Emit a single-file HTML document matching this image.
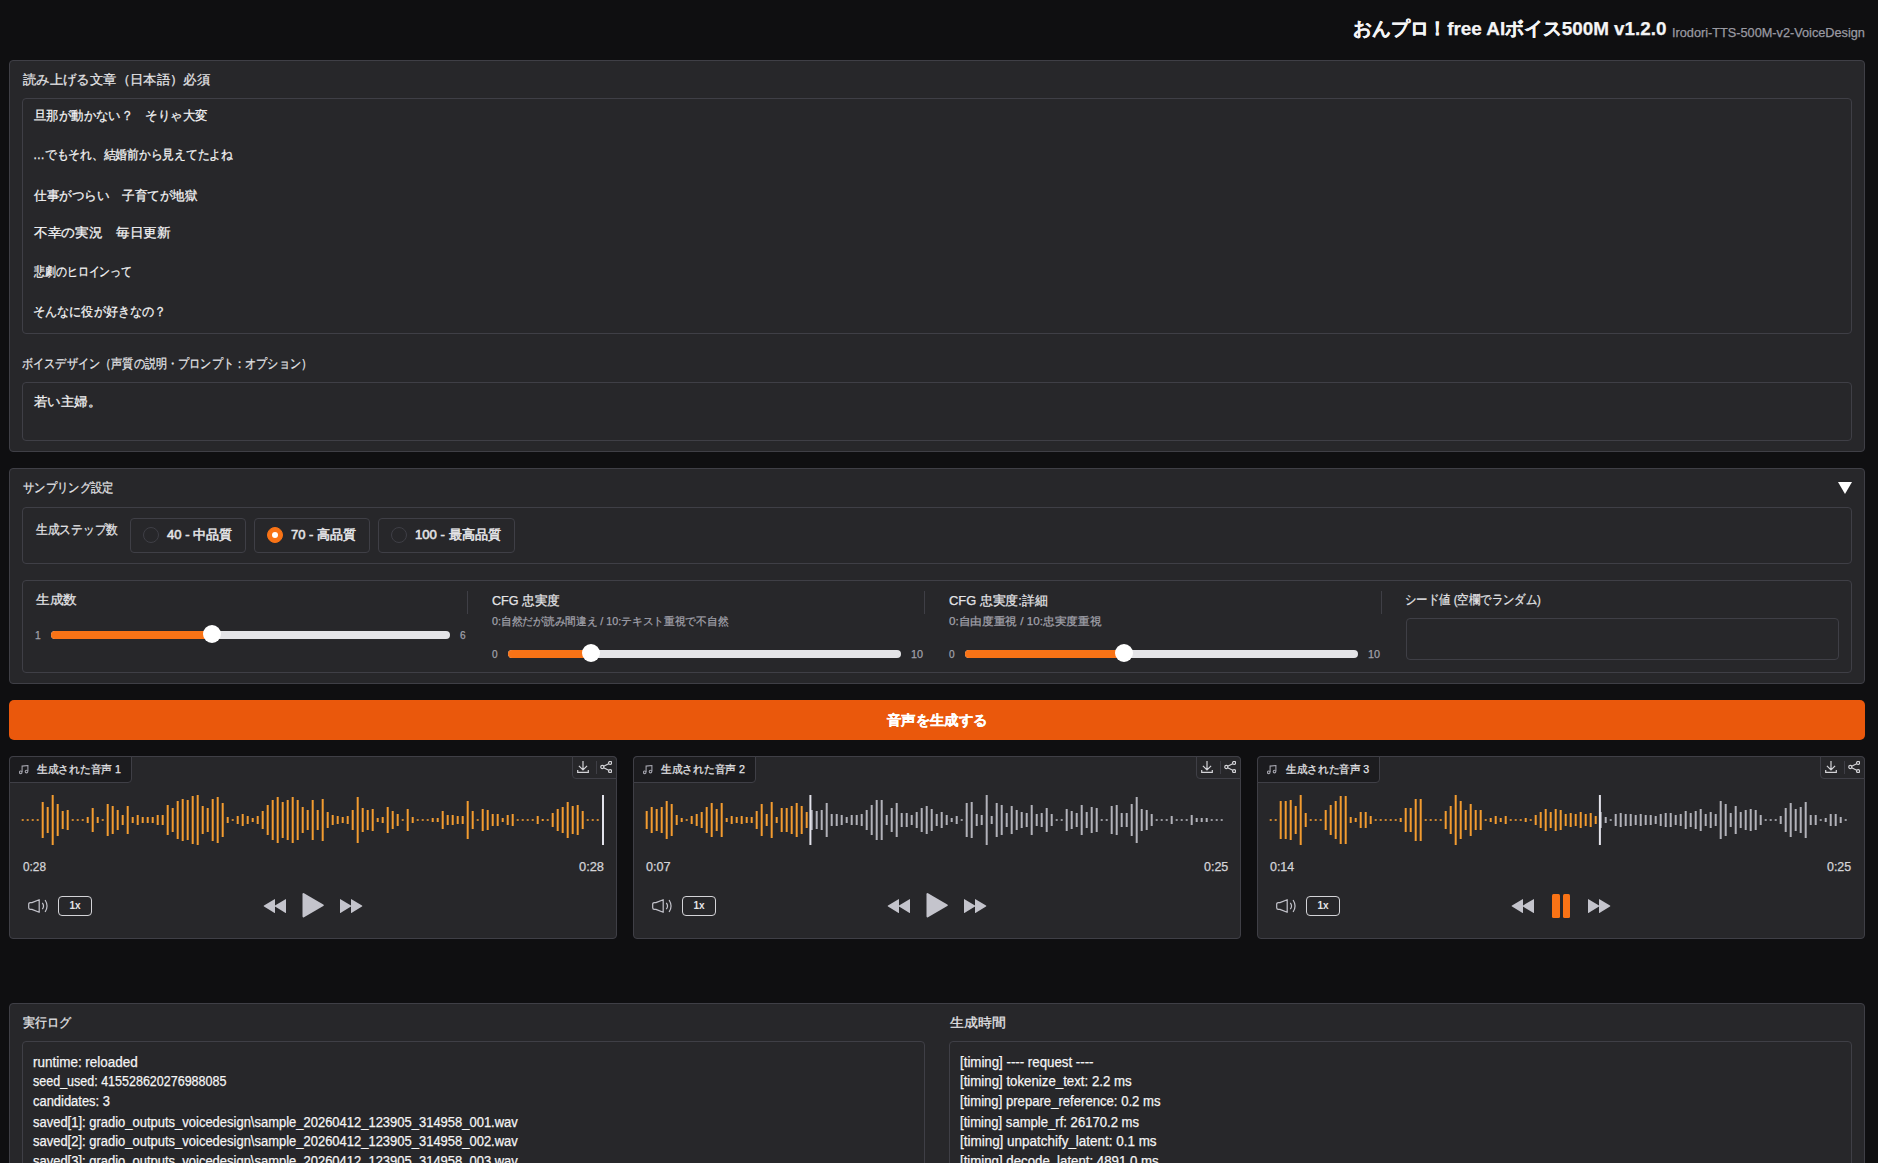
<!DOCTYPE html>
<html lang="ja"><head><meta charset="utf-8">
<style>
*{box-sizing:border-box;margin:0;padding:0}
html,body{width:1878px;height:1163px;overflow:hidden;background:#0f0f11;font-family:"Liberation Sans",sans-serif;color:#e4e4e7}
.a{position:absolute}
.t{position:absolute;white-space:pre;line-height:1.2;transform-origin:0 0;-webkit-text-stroke:0.25px currentColor}
.blk{position:absolute;background:#27272a;border:1px solid #3f3f46;border-radius:4px}
.ta{position:absolute;background:#27272a;border:1px solid #3f3f46;border-radius:4px}
.track{position:absolute;height:8px;border-radius:4px;background:#e4e4e7;overflow:hidden}
.fill{position:absolute;left:0;top:0;height:8px;background:#f97316}
.thumb{position:absolute;width:18px;height:18px;border-radius:50%;background:#fff}
.radio{position:absolute;top:518px;height:35px;border:1px solid #3f3f46;border-radius:4px;background:#27272a}
.rc{position:absolute;left:12px;top:8px;width:16px;height:16px;border-radius:50%;border:1px solid #3f3f46;background:#27272a}
.sep{position:absolute;width:1px;height:23px;top:591px;background:#3f3f46}
.player{position:absolute;top:756px;width:608px;height:183px;background:#27272a;border:1px solid #3f3f46;border-radius:4px}
.tab{position:absolute;left:-1px;top:-1px;width:123px;height:27px;background:#1c1c1f;border:1px solid #3f3f46;border-radius:4px 0 4px 0}
.icons{position:absolute;right:-1px;top:-1px;width:45px;height:23px;border:1px solid #3f3f46;border-radius:0 4px 0 4px;background:#27272a}
.wave{position:absolute;left:0;top:0}
.pause{position:absolute;top:136.8px;width:7.6px;height:24.3px;border-radius:1.5px;background:#f97316}
.rate{position:absolute;left:48px;top:139px;width:34px;height:20px;border:1.5px solid #d4d4d8;border-radius:4px;font-size:10px;font-weight:bold;line-height:17px;text-align:center;color:#e4e4e7}
</style></head><body>
<div class="blk" style="left:9px;top:60px;width:1856px;height:392px"></div>
<div class="ta" style="left:22px;top:98px;width:1830px;height:236px"></div>
<div class="ta" style="left:22px;top:382px;width:1830px;height:59px"></div>

<div class="blk" style="left:9px;top:468px;width:1856px;height:216px"></div>
<svg class="a" style="left:1838px;top:482px" width="14" height="12"><polygon points="0,0 14,0 7,12" fill="#fff"/></svg>
<div class="ta" style="left:22px;top:507px;width:1830px;height:57px"></div>
<div class="radio" style="left:130px;width:116px"><div class="rc"></div></div>
<div class="radio" style="left:254px;width:116px"><div class="rc" style="background:#f97316;border-color:#f97316"><div style="position:absolute;left:4px;top:4px;width:6px;height:6px;border-radius:50%;background:#fff"></div></div></div>
<div class="radio" style="left:378px;width:137px"><div class="rc"></div></div>

<div class="ta" style="left:22px;top:580px;width:1830px;height:93px"></div>
<div class="sep" style="left:467px"></div>
<div class="sep" style="left:924px"></div>
<div class="sep" style="left:1381px"></div>
<div class="track" style="left:51px;top:631px;width:399px"><div class="fill" style="width:161px"></div></div>
<div class="thumb" style="left:202.8px;top:625px"></div>
<div class="track" style="left:508px;top:650px;width:393px"><div class="fill" style="width:83px"></div></div>
<div class="thumb" style="left:581.8px;top:643.8px"></div>
<div class="track" style="left:965px;top:650px;width:393px"><div class="fill" style="width:159px"></div></div>
<div class="thumb" style="left:1114.7px;top:643.8px"></div>
<div class="ta" style="left:1406px;top:618px;width:433px;height:42px"></div>

<div class="a" style="left:9px;top:700px;width:1856px;height:40px;background:#ea580c;border-radius:5px"></div>

<div class="player" style="left:9px">
<div class="tab"><svg class="a" style="left:9px;top:8px" width="11" height="10"><g fill="none" stroke="#a1a1aa" stroke-width="1.1"><path d="M3.1 7V1.1L8.9 0.5V6.3"/><circle cx="1.7" cy="7.3" r="1.3"/><circle cx="7.5" cy="6.6" r="1.3"/></g></svg></div>
<div class="icons"><svg class="a" style="left:4px;top:4px" width="12" height="12"><path d="M6 0V8.6M1.9 4.8 6 8.9 10.1 4.8M0.7 9V11.4H11.3V9" fill="none" stroke="#d4d4d8" stroke-width="1.2"/></svg><div class="a" style="left:23px;top:4px;width:1px;height:13px;background:#3f3f46"></div><svg class="a" style="left:27px;top:4px" width="12" height="12"><g fill="none" stroke="#d4d4d8" stroke-width="1.2"><circle cx="10.1" cy="1.9" r="1.55"/><circle cx="2.3" cy="6" r="1.55"/><circle cx="10.1" cy="10.1" r="1.55"/><path d="M3.7 5.2 8.7 2.7M3.7 6.8 8.7 9.3"/></g></svg></div>
<svg class="wave" width="608" height="120"><rect x="11.7" y="62.2" width="2" height="1.6" fill="#f39c30"/><rect x="16.7" y="62.2" width="2" height="1.6" fill="#f39c30"/><rect x="21.7" y="62.2" width="2" height="1.6" fill="#f39c30"/><rect x="26.7" y="62.2" width="2" height="1.6" fill="#f39c30"/><rect x="31.7" y="45.0" width="2" height="36" fill="#f39c30"/><rect x="36.7" y="50.0" width="2" height="26" fill="#f39c30"/><rect x="41.7" y="38.0" width="2" height="50" fill="#f39c30"/><rect x="46.7" y="47.0" width="2" height="32" fill="#f39c30"/><rect x="51.7" y="54.0" width="2" height="18" fill="#f39c30"/><rect x="56.7" y="53.0" width="2" height="20" fill="#f39c30"/><rect x="61.7" y="62.2" width="2" height="1.6" fill="#f39c30"/><rect x="66.7" y="62.2" width="2" height="1.6" fill="#f39c30"/><rect x="71.7" y="62.2" width="2" height="1.6" fill="#f39c30"/><rect x="76.7" y="60.0" width="2" height="6" fill="#f39c30"/><rect x="81.7" y="51.0" width="2" height="24" fill="#f39c30"/><rect x="86.7" y="60.0" width="2" height="6" fill="#f39c30"/><rect x="91.7" y="62.2" width="2" height="1.6" fill="#f39c30"/><rect x="96.7" y="47.0" width="2" height="32" fill="#f39c30"/><rect x="101.7" y="49.0" width="2" height="28" fill="#f39c30"/><rect x="106.7" y="53.0" width="2" height="20" fill="#f39c30"/><rect x="111.7" y="58.0" width="2" height="10" fill="#f39c30"/><rect x="116.7" y="49.0" width="2" height="28" fill="#f39c30"/><rect x="121.7" y="60.0" width="2" height="6" fill="#f39c30"/><rect x="126.7" y="58.0" width="2" height="10" fill="#f39c30"/><rect x="131.7" y="60.0" width="2" height="6" fill="#f39c30"/><rect x="136.7" y="60.0" width="2" height="6" fill="#f39c30"/><rect x="141.7" y="60.0" width="2" height="6" fill="#f39c30"/><rect x="146.7" y="58.0" width="2" height="10" fill="#f39c30"/><rect x="151.7" y="58.0" width="2" height="10" fill="#f39c30"/><rect x="156.7" y="48.0" width="2" height="30" fill="#f39c30"/><rect x="161.7" y="51.0" width="2" height="24" fill="#f39c30"/><rect x="166.7" y="44.0" width="2" height="38" fill="#f39c30"/><rect x="171.7" y="42.0" width="2" height="42" fill="#f39c30"/><rect x="176.7" y="43.0" width="2" height="40" fill="#f39c30"/><rect x="181.7" y="39.0" width="2" height="48" fill="#f39c30"/><rect x="186.7" y="38.0" width="2" height="50" fill="#f39c30"/><rect x="191.7" y="49.0" width="2" height="28" fill="#f39c30"/><rect x="196.7" y="51.0" width="2" height="24" fill="#f39c30"/><rect x="201.7" y="42.0" width="2" height="42" fill="#f39c30"/><rect x="206.7" y="40.0" width="2" height="46" fill="#f39c30"/><rect x="211.7" y="46.0" width="2" height="34" fill="#f39c30"/><rect x="216.7" y="60.0" width="2" height="6" fill="#f39c30"/><rect x="221.7" y="62.2" width="2" height="1.6" fill="#f39c30"/><rect x="226.7" y="59.0" width="2" height="8" fill="#f39c30"/><rect x="231.7" y="57.0" width="2" height="12" fill="#f39c30"/><rect x="236.7" y="59.0" width="2" height="8" fill="#f39c30"/><rect x="241.7" y="61.0" width="2" height="4" fill="#f39c30"/><rect x="246.7" y="59.0" width="2" height="8" fill="#f39c30"/><rect x="251.7" y="54.0" width="2" height="18" fill="#f39c30"/><rect x="256.7" y="48.0" width="2" height="30" fill="#f39c30"/><rect x="261.7" y="43.0" width="2" height="40" fill="#f39c30"/><rect x="266.7" y="40.0" width="2" height="46" fill="#f39c30"/><rect x="271.7" y="45.0" width="2" height="36" fill="#f39c30"/><rect x="276.7" y="43.0" width="2" height="40" fill="#f39c30"/><rect x="281.7" y="40.0" width="2" height="46" fill="#f39c30"/><rect x="286.7" y="43.0" width="2" height="40" fill="#f39c30"/><rect x="291.7" y="50.0" width="2" height="26" fill="#f39c30"/><rect x="296.7" y="53.0" width="2" height="20" fill="#f39c30"/><rect x="301.7" y="43.0" width="2" height="40" fill="#f39c30"/><rect x="306.7" y="53.0" width="2" height="20" fill="#f39c30"/><rect x="311.7" y="42.0" width="2" height="42" fill="#f39c30"/><rect x="316.7" y="55.0" width="2" height="16" fill="#f39c30"/><rect x="321.7" y="58.0" width="2" height="10" fill="#f39c30"/><rect x="326.7" y="59.0" width="2" height="8" fill="#f39c30"/><rect x="331.7" y="60.0" width="2" height="6" fill="#f39c30"/><rect x="336.7" y="59.0" width="2" height="8" fill="#f39c30"/><rect x="341.7" y="53.0" width="2" height="20" fill="#f39c30"/><rect x="346.7" y="40.0" width="2" height="46" fill="#f39c30"/><rect x="351.7" y="51.0" width="2" height="24" fill="#f39c30"/><rect x="356.7" y="53.0" width="2" height="20" fill="#f39c30"/><rect x="361.7" y="52.0" width="2" height="22" fill="#f39c30"/><rect x="366.7" y="61.0" width="2" height="4" fill="#f39c30"/><rect x="371.7" y="60.0" width="2" height="6" fill="#f39c30"/><rect x="376.7" y="50.0" width="2" height="26" fill="#f39c30"/><rect x="381.7" y="54.0" width="2" height="18" fill="#f39c30"/><rect x="386.7" y="57.0" width="2" height="12" fill="#f39c30"/><rect x="391.7" y="62.2" width="2" height="1.6" fill="#f39c30"/><rect x="396.7" y="52.0" width="2" height="22" fill="#f39c30"/><rect x="401.7" y="60.0" width="2" height="6" fill="#f39c30"/><rect x="406.7" y="62.2" width="2" height="1.6" fill="#f39c30"/><rect x="411.7" y="62.2" width="2" height="1.6" fill="#f39c30"/><rect x="416.7" y="62.2" width="2" height="1.6" fill="#f39c30"/><rect x="421.7" y="61.0" width="2" height="4" fill="#f39c30"/><rect x="426.7" y="61.0" width="2" height="4" fill="#f39c30"/><rect x="431.7" y="54.0" width="2" height="18" fill="#f39c30"/><rect x="436.7" y="58.0" width="2" height="10" fill="#f39c30"/><rect x="441.7" y="58.0" width="2" height="10" fill="#f39c30"/><rect x="446.7" y="59.0" width="2" height="8" fill="#f39c30"/><rect x="451.7" y="59.0" width="2" height="8" fill="#f39c30"/><rect x="456.7" y="44.0" width="2" height="38" fill="#f39c30"/><rect x="461.7" y="54.0" width="2" height="18" fill="#f39c30"/><rect x="466.7" y="62.2" width="2" height="1.6" fill="#f39c30"/><rect x="471.7" y="52.0" width="2" height="22" fill="#f39c30"/><rect x="476.7" y="53.0" width="2" height="20" fill="#f39c30"/><rect x="481.7" y="57.0" width="2" height="12" fill="#f39c30"/><rect x="486.7" y="57.0" width="2" height="12" fill="#f39c30"/><rect x="491.7" y="61.0" width="2" height="4" fill="#f39c30"/><rect x="496.7" y="58.0" width="2" height="10" fill="#f39c30"/><rect x="501.7" y="57.0" width="2" height="12" fill="#f39c30"/><rect x="506.7" y="62.2" width="2" height="1.6" fill="#f39c30"/><rect x="511.7" y="62.2" width="2" height="1.6" fill="#f39c30"/><rect x="516.7" y="62.2" width="2" height="1.6" fill="#f39c30"/><rect x="521.7" y="62.2" width="2" height="1.6" fill="#f39c30"/><rect x="526.7" y="59.0" width="2" height="8" fill="#f39c30"/><rect x="531.7" y="62.0" width="2" height="2" fill="#f39c30"/><rect x="536.7" y="62.2" width="2" height="1.6" fill="#f39c30"/><rect x="541.7" y="56.0" width="2" height="14" fill="#f39c30"/><rect x="546.7" y="52.0" width="2" height="22" fill="#f39c30"/><rect x="551.7" y="50.0" width="2" height="26" fill="#f39c30"/><rect x="556.7" y="45.0" width="2" height="36" fill="#f39c30"/><rect x="561.7" y="49.0" width="2" height="28" fill="#f39c30"/><rect x="566.7" y="48.0" width="2" height="30" fill="#f39c30"/><rect x="571.7" y="54.0" width="2" height="18" fill="#f39c30"/><rect x="576.7" y="62.2" width="2" height="1.6" fill="#f39c30"/><rect x="581.7" y="62.2" width="2" height="1.6" fill="#f39c30"/><rect x="586.7" y="62.2" width="2" height="1.6" fill="#f39c30"/><rect x="592" y="38" width="2" height="50" fill="#e2e2ea"/></svg>
<svg class="a" style="left:18px;top:142px" width="22" height="16"><g fill="none" stroke="#c4c4cc" stroke-width="1.2" stroke-linejoin="round"><path d="M3.9 3.6H2.4Q0.7 3.6 0.7 5.3V8.7Q0.7 10.4 2.4 10.4H3.9L11.2 13.3V0.7Z"/><path d="M14.3 3.8Q16.8 7 14.3 10.2M17.1 1Q21 7 17.1 13"/></g></svg>
<div class="rate">1x</div>
<svg class="a" style="left:253px;top:141px" width="24" height="16"><path d="M11.5 1.2 Q12 0.5 12 1.5 V14.5 Q12 15.5 11.2 14.8 L1 8.6 Q0.2 8 1 7.4Z M22.5 1.2 Q23 0.5 23 1.5 V14.5 Q23 15.5 22.2 14.8 L12 8.6 Q11.2 8 12 7.4Z" fill="#c4c4cc"/></svg><svg class="a" style="left:291px;top:135px" width="24" height="28"><path d="M1.5 2.2 Q1.5 0.5 3 1.3 L22.3 12.4 Q23.6 13.2 22.3 14 L3 25.2 Q1.5 26 1.5 24.3Z" fill="#c4c4cc"/></svg><svg class="a" style="left:329px;top:141px" width="24" height="16"><path d="M1.5 1.2 Q1 0.5 1 1.5 V14.5 Q1 15.5 1.8 14.8 L12 8.6 Q12.8 8 12 7.4Z M12.5 1.2 Q12 0.5 12 1.5 V14.5 Q12 15.5 12.8 14.8 L23 8.6 Q23.8 8 23 7.4Z" fill="#c4c4cc"/></svg>
</div><div class="player" style="left:633px">
<div class="tab"><svg class="a" style="left:9px;top:8px" width="11" height="10"><g fill="none" stroke="#a1a1aa" stroke-width="1.1"><path d="M3.1 7V1.1L8.9 0.5V6.3"/><circle cx="1.7" cy="7.3" r="1.3"/><circle cx="7.5" cy="6.6" r="1.3"/></g></svg></div>
<div class="icons"><svg class="a" style="left:4px;top:4px" width="12" height="12"><path d="M6 0V8.6M1.9 4.8 6 8.9 10.1 4.8M0.7 9V11.4H11.3V9" fill="none" stroke="#d4d4d8" stroke-width="1.2"/></svg><div class="a" style="left:23px;top:4px;width:1px;height:13px;background:#3f3f46"></div><svg class="a" style="left:27px;top:4px" width="12" height="12"><g fill="none" stroke="#d4d4d8" stroke-width="1.2"><circle cx="10.1" cy="1.9" r="1.55"/><circle cx="2.3" cy="6" r="1.55"/><circle cx="10.1" cy="10.1" r="1.55"/><path d="M3.7 5.2 8.7 2.7M3.7 6.8 8.7 9.3"/></g></svg></div>
<svg class="wave" width="608" height="120"><rect x="11.7" y="54.0" width="2" height="18" fill="#f39c30"/><rect x="16.7" y="50.0" width="2" height="26" fill="#f39c30"/><rect x="21.7" y="52.0" width="2" height="22" fill="#f39c30"/><rect x="26.7" y="50.0" width="2" height="26" fill="#f39c30"/><rect x="31.7" y="44.0" width="2" height="38" fill="#f39c30"/><rect x="36.7" y="47.0" width="2" height="32" fill="#f39c30"/><rect x="41.7" y="58.0" width="2" height="10" fill="#f39c30"/><rect x="46.7" y="61.0" width="2" height="4" fill="#f39c30"/><rect x="51.7" y="62.2" width="2" height="1.6" fill="#f39c30"/><rect x="56.7" y="59.0" width="2" height="8" fill="#f39c30"/><rect x="61.7" y="57.0" width="2" height="12" fill="#f39c30"/><rect x="66.7" y="55.0" width="2" height="16" fill="#f39c30"/><rect x="71.7" y="50.0" width="2" height="26" fill="#f39c30"/><rect x="76.7" y="46.0" width="2" height="34" fill="#f39c30"/><rect x="81.7" y="52.0" width="2" height="22" fill="#f39c30"/><rect x="86.7" y="46.0" width="2" height="34" fill="#f39c30"/><rect x="91.7" y="61.0" width="2" height="4" fill="#f39c30"/><rect x="96.7" y="59.0" width="2" height="8" fill="#f39c30"/><rect x="101.7" y="60.0" width="2" height="6" fill="#f39c30"/><rect x="106.7" y="59.0" width="2" height="8" fill="#f39c30"/><rect x="111.7" y="60.0" width="2" height="6" fill="#f39c30"/><rect x="116.7" y="60.0" width="2" height="6" fill="#f39c30"/><rect x="121.7" y="54.0" width="2" height="18" fill="#f39c30"/><rect x="126.7" y="47.0" width="2" height="32" fill="#f39c30"/><rect x="131.7" y="57.0" width="2" height="12" fill="#f39c30"/><rect x="136.7" y="45.0" width="2" height="36" fill="#f39c30"/><rect x="141.7" y="60.0" width="2" height="6" fill="#f39c30"/><rect x="146.7" y="51.0" width="2" height="24" fill="#f39c30"/><rect x="151.7" y="51.0" width="2" height="24" fill="#f39c30"/><rect x="156.7" y="49.0" width="2" height="28" fill="#f39c30"/><rect x="161.7" y="46.0" width="2" height="34" fill="#f39c30"/><rect x="166.7" y="49.0" width="2" height="28" fill="#f39c30"/><rect x="171.7" y="55.0" width="2" height="16" fill="#f39c30"/><rect x="176.7" y="53.0" width="2" height="20" fill="#b2b2ba"/><rect x="181.7" y="54.0" width="2" height="18" fill="#b2b2ba"/><rect x="186.7" y="53.0" width="2" height="20" fill="#b2b2ba"/><rect x="191.7" y="46.0" width="2" height="34" fill="#b2b2ba"/><rect x="196.7" y="57.0" width="2" height="12" fill="#b2b2ba"/><rect x="201.7" y="57.0" width="2" height="12" fill="#b2b2ba"/><rect x="206.7" y="58.0" width="2" height="10" fill="#b2b2ba"/><rect x="211.7" y="60.0" width="2" height="6" fill="#b2b2ba"/><rect x="216.7" y="58.0" width="2" height="10" fill="#b2b2ba"/><rect x="221.7" y="58.0" width="2" height="10" fill="#b2b2ba"/><rect x="226.7" y="57.0" width="2" height="12" fill="#b2b2ba"/><rect x="231.7" y="53.0" width="2" height="20" fill="#b2b2ba"/><rect x="236.7" y="48.0" width="2" height="30" fill="#b2b2ba"/><rect x="241.7" y="43.0" width="2" height="40" fill="#b2b2ba"/><rect x="246.7" y="43.0" width="2" height="40" fill="#b2b2ba"/><rect x="251.7" y="58.0" width="2" height="10" fill="#b2b2ba"/><rect x="256.7" y="51.0" width="2" height="24" fill="#b2b2ba"/><rect x="261.7" y="46.0" width="2" height="34" fill="#b2b2ba"/><rect x="266.7" y="56.0" width="2" height="14" fill="#b2b2ba"/><rect x="271.7" y="56.0" width="2" height="14" fill="#b2b2ba"/><rect x="276.7" y="58.0" width="2" height="10" fill="#b2b2ba"/><rect x="281.7" y="55.0" width="2" height="16" fill="#b2b2ba"/><rect x="286.7" y="51.0" width="2" height="24" fill="#b2b2ba"/><rect x="291.7" y="49.0" width="2" height="28" fill="#b2b2ba"/><rect x="296.7" y="52.0" width="2" height="22" fill="#b2b2ba"/><rect x="301.7" y="57.0" width="2" height="12" fill="#b2b2ba"/><rect x="306.7" y="55.0" width="2" height="16" fill="#b2b2ba"/><rect x="311.7" y="58.0" width="2" height="10" fill="#b2b2ba"/><rect x="316.7" y="61.0" width="2" height="4" fill="#b2b2ba"/><rect x="321.7" y="59.0" width="2" height="8" fill="#b2b2ba"/><rect x="326.7" y="62.2" width="2" height="1.6" fill="#b2b2ba"/><rect x="331.7" y="46.0" width="2" height="34" fill="#b2b2ba"/><rect x="336.7" y="45.0" width="2" height="36" fill="#b2b2ba"/><rect x="341.7" y="57.0" width="2" height="12" fill="#b2b2ba"/><rect x="346.7" y="58.0" width="2" height="10" fill="#b2b2ba"/><rect x="351.7" y="38.0" width="2" height="50" fill="#b2b2ba"/><rect x="356.7" y="59.0" width="2" height="8" fill="#b2b2ba"/><rect x="361.7" y="46.0" width="2" height="34" fill="#b2b2ba"/><rect x="366.7" y="48.0" width="2" height="30" fill="#b2b2ba"/><rect x="371.7" y="56.0" width="2" height="14" fill="#b2b2ba"/><rect x="376.7" y="49.0" width="2" height="28" fill="#b2b2ba"/><rect x="381.7" y="53.0" width="2" height="20" fill="#b2b2ba"/><rect x="386.7" y="55.0" width="2" height="16" fill="#b2b2ba"/><rect x="391.7" y="56.0" width="2" height="14" fill="#b2b2ba"/><rect x="396.7" y="48.0" width="2" height="30" fill="#b2b2ba"/><rect x="401.7" y="57.0" width="2" height="12" fill="#b2b2ba"/><rect x="406.7" y="56.0" width="2" height="14" fill="#b2b2ba"/><rect x="411.7" y="51.0" width="2" height="24" fill="#b2b2ba"/><rect x="416.7" y="57.0" width="2" height="12" fill="#b2b2ba"/><rect x="421.7" y="62.2" width="2" height="1.6" fill="#b2b2ba"/><rect x="426.7" y="62.2" width="2" height="1.6" fill="#b2b2ba"/><rect x="431.7" y="52.0" width="2" height="22" fill="#b2b2ba"/><rect x="436.7" y="54.0" width="2" height="18" fill="#b2b2ba"/><rect x="441.7" y="56.0" width="2" height="14" fill="#b2b2ba"/><rect x="446.7" y="48.0" width="2" height="30" fill="#b2b2ba"/><rect x="451.7" y="55.0" width="2" height="16" fill="#b2b2ba"/><rect x="456.7" y="50.0" width="2" height="26" fill="#b2b2ba"/><rect x="461.7" y="51.0" width="2" height="24" fill="#b2b2ba"/><rect x="466.7" y="62.2" width="2" height="1.6" fill="#b2b2ba"/><rect x="471.7" y="62.2" width="2" height="1.6" fill="#b2b2ba"/><rect x="476.7" y="49.0" width="2" height="28" fill="#b2b2ba"/><rect x="481.7" y="48.0" width="2" height="30" fill="#b2b2ba"/><rect x="486.7" y="56.0" width="2" height="14" fill="#b2b2ba"/><rect x="491.7" y="56.0" width="2" height="14" fill="#b2b2ba"/><rect x="496.7" y="47.0" width="2" height="32" fill="#b2b2ba"/><rect x="501.7" y="40.0" width="2" height="46" fill="#b2b2ba"/><rect x="506.7" y="52.0" width="2" height="22" fill="#b2b2ba"/><rect x="511.7" y="53.0" width="2" height="20" fill="#b2b2ba"/><rect x="516.7" y="57.0" width="2" height="12" fill="#b2b2ba"/><rect x="521.7" y="62.2" width="2" height="1.6" fill="#b2b2ba"/><rect x="526.7" y="62.2" width="2" height="1.6" fill="#b2b2ba"/><rect x="531.7" y="62.2" width="2" height="1.6" fill="#b2b2ba"/><rect x="536.7" y="59.0" width="2" height="8" fill="#b2b2ba"/><rect x="541.7" y="62.2" width="2" height="1.6" fill="#b2b2ba"/><rect x="546.7" y="62.2" width="2" height="1.6" fill="#b2b2ba"/><rect x="551.7" y="62.2" width="2" height="1.6" fill="#b2b2ba"/><rect x="556.7" y="58.0" width="2" height="10" fill="#b2b2ba"/><rect x="561.7" y="61.0" width="2" height="4" fill="#b2b2ba"/><rect x="566.7" y="61.0" width="2" height="4" fill="#b2b2ba"/><rect x="571.7" y="61.0" width="2" height="4" fill="#b2b2ba"/><rect x="576.7" y="62.2" width="2" height="1.6" fill="#b2b2ba"/><rect x="581.7" y="62.2" width="2" height="1.6" fill="#b2b2ba"/><rect x="586.7" y="62.2" width="2" height="1.6" fill="#b2b2ba"/><rect x="175.4" y="38" width="2" height="50" fill="#e2e2ea"/></svg>
<svg class="a" style="left:18px;top:142px" width="22" height="16"><g fill="none" stroke="#c4c4cc" stroke-width="1.2" stroke-linejoin="round"><path d="M3.9 3.6H2.4Q0.7 3.6 0.7 5.3V8.7Q0.7 10.4 2.4 10.4H3.9L11.2 13.3V0.7Z"/><path d="M14.3 3.8Q16.8 7 14.3 10.2M17.1 1Q21 7 17.1 13"/></g></svg>
<div class="rate">1x</div>
<svg class="a" style="left:253px;top:141px" width="24" height="16"><path d="M11.5 1.2 Q12 0.5 12 1.5 V14.5 Q12 15.5 11.2 14.8 L1 8.6 Q0.2 8 1 7.4Z M22.5 1.2 Q23 0.5 23 1.5 V14.5 Q23 15.5 22.2 14.8 L12 8.6 Q11.2 8 12 7.4Z" fill="#c4c4cc"/></svg><svg class="a" style="left:291px;top:135px" width="24" height="28"><path d="M1.5 2.2 Q1.5 0.5 3 1.3 L22.3 12.4 Q23.6 13.2 22.3 14 L3 25.2 Q1.5 26 1.5 24.3Z" fill="#c4c4cc"/></svg><svg class="a" style="left:329px;top:141px" width="24" height="16"><path d="M1.5 1.2 Q1 0.5 1 1.5 V14.5 Q1 15.5 1.8 14.8 L12 8.6 Q12.8 8 12 7.4Z M12.5 1.2 Q12 0.5 12 1.5 V14.5 Q12 15.5 12.8 14.8 L23 8.6 Q23.8 8 23 7.4Z" fill="#c4c4cc"/></svg>
</div><div class="player" style="left:1257px">
<div class="tab"><svg class="a" style="left:9px;top:8px" width="11" height="10"><g fill="none" stroke="#a1a1aa" stroke-width="1.1"><path d="M3.1 7V1.1L8.9 0.5V6.3"/><circle cx="1.7" cy="7.3" r="1.3"/><circle cx="7.5" cy="6.6" r="1.3"/></g></svg></div>
<div class="icons"><svg class="a" style="left:4px;top:4px" width="12" height="12"><path d="M6 0V8.6M1.9 4.8 6 8.9 10.1 4.8M0.7 9V11.4H11.3V9" fill="none" stroke="#d4d4d8" stroke-width="1.2"/></svg><div class="a" style="left:23px;top:4px;width:1px;height:13px;background:#3f3f46"></div><svg class="a" style="left:27px;top:4px" width="12" height="12"><g fill="none" stroke="#d4d4d8" stroke-width="1.2"><circle cx="10.1" cy="1.9" r="1.55"/><circle cx="2.3" cy="6" r="1.55"/><circle cx="10.1" cy="10.1" r="1.55"/><path d="M3.7 5.2 8.7 2.7M3.7 6.8 8.7 9.3"/></g></svg></div>
<svg class="wave" width="608" height="120"><rect x="11.7" y="62.2" width="2" height="1.6" fill="#f39c30"/><rect x="16.7" y="62.2" width="2" height="1.6" fill="#f39c30"/><rect x="21.7" y="44.0" width="2" height="38" fill="#f39c30"/><rect x="26.7" y="44.0" width="2" height="38" fill="#f39c30"/><rect x="31.7" y="43.0" width="2" height="40" fill="#f39c30"/><rect x="36.7" y="49.0" width="2" height="28" fill="#f39c30"/><rect x="41.7" y="38.0" width="2" height="50" fill="#f39c30"/><rect x="46.7" y="56.0" width="2" height="14" fill="#f39c30"/><rect x="51.7" y="62.2" width="2" height="1.6" fill="#f39c30"/><rect x="56.7" y="62.2" width="2" height="1.6" fill="#f39c30"/><rect x="61.7" y="62.2" width="2" height="1.6" fill="#f39c30"/><rect x="66.7" y="53.0" width="2" height="20" fill="#f39c30"/><rect x="71.7" y="48.0" width="2" height="30" fill="#f39c30"/><rect x="76.7" y="44.0" width="2" height="38" fill="#f39c30"/><rect x="81.7" y="39.0" width="2" height="48" fill="#f39c30"/><rect x="86.7" y="39.0" width="2" height="48" fill="#f39c30"/><rect x="91.7" y="60.0" width="2" height="6" fill="#f39c30"/><rect x="96.7" y="61.0" width="2" height="4" fill="#f39c30"/><rect x="101.7" y="55.0" width="2" height="16" fill="#f39c30"/><rect x="106.7" y="55.0" width="2" height="16" fill="#f39c30"/><rect x="111.7" y="59.0" width="2" height="8" fill="#f39c30"/><rect x="116.7" y="62.2" width="2" height="1.6" fill="#f39c30"/><rect x="121.7" y="62.2" width="2" height="1.6" fill="#f39c30"/><rect x="126.7" y="62.2" width="2" height="1.6" fill="#f39c30"/><rect x="131.7" y="62.2" width="2" height="1.6" fill="#f39c30"/><rect x="136.7" y="62.2" width="2" height="1.6" fill="#f39c30"/><rect x="141.7" y="61.0" width="2" height="4" fill="#f39c30"/><rect x="146.7" y="51.0" width="2" height="24" fill="#f39c30"/><rect x="151.7" y="51.0" width="2" height="24" fill="#f39c30"/><rect x="156.7" y="42.0" width="2" height="42" fill="#f39c30"/><rect x="161.7" y="42.0" width="2" height="42" fill="#f39c30"/><rect x="166.7" y="62.2" width="2" height="1.6" fill="#f39c30"/><rect x="171.7" y="62.2" width="2" height="1.6" fill="#f39c30"/><rect x="176.7" y="62.2" width="2" height="1.6" fill="#f39c30"/><rect x="181.7" y="62.2" width="2" height="1.6" fill="#f39c30"/><rect x="186.7" y="54.0" width="2" height="18" fill="#f39c30"/><rect x="191.7" y="49.0" width="2" height="28" fill="#f39c30"/><rect x="196.7" y="38.0" width="2" height="50" fill="#f39c30"/><rect x="201.7" y="44.0" width="2" height="38" fill="#f39c30"/><rect x="206.7" y="53.0" width="2" height="20" fill="#f39c30"/><rect x="211.7" y="47.0" width="2" height="32" fill="#f39c30"/><rect x="216.7" y="53.0" width="2" height="20" fill="#f39c30"/><rect x="221.7" y="53.0" width="2" height="20" fill="#f39c30"/><rect x="226.7" y="62.2" width="2" height="1.6" fill="#f39c30"/><rect x="231.7" y="61.0" width="2" height="4" fill="#f39c30"/><rect x="236.7" y="59.0" width="2" height="8" fill="#f39c30"/><rect x="241.7" y="61.0" width="2" height="4" fill="#f39c30"/><rect x="246.7" y="59.0" width="2" height="8" fill="#f39c30"/><rect x="251.7" y="62.2" width="2" height="1.6" fill="#f39c30"/><rect x="256.7" y="62.2" width="2" height="1.6" fill="#f39c30"/><rect x="261.7" y="62.2" width="2" height="1.6" fill="#f39c30"/><rect x="266.7" y="61.0" width="2" height="4" fill="#f39c30"/><rect x="271.7" y="62.2" width="2" height="1.6" fill="#f39c30"/><rect x="276.7" y="58.0" width="2" height="10" fill="#f39c30"/><rect x="281.7" y="55.0" width="2" height="16" fill="#f39c30"/><rect x="286.7" y="52.0" width="2" height="22" fill="#f39c30"/><rect x="291.7" y="55.0" width="2" height="16" fill="#f39c30"/><rect x="296.7" y="52.0" width="2" height="22" fill="#f39c30"/><rect x="301.7" y="53.0" width="2" height="20" fill="#f39c30"/><rect x="306.7" y="57.0" width="2" height="12" fill="#f39c30"/><rect x="311.7" y="56.0" width="2" height="14" fill="#f39c30"/><rect x="316.7" y="57.0" width="2" height="12" fill="#f39c30"/><rect x="321.7" y="55.0" width="2" height="16" fill="#f39c30"/><rect x="326.7" y="57.0" width="2" height="12" fill="#f39c30"/><rect x="331.7" y="56.0" width="2" height="14" fill="#f39c30"/><rect x="336.7" y="59.0" width="2" height="8" fill="#f39c30"/><rect x="341.7" y="55.0" width="2" height="16" fill="#b2b2ba"/><rect x="346.7" y="60.0" width="2" height="6" fill="#b2b2ba"/><rect x="351.7" y="62.2" width="2" height="1.6" fill="#b2b2ba"/><rect x="356.7" y="57.0" width="2" height="12" fill="#b2b2ba"/><rect x="361.7" y="56.0" width="2" height="14" fill="#b2b2ba"/><rect x="366.7" y="57.0" width="2" height="12" fill="#b2b2ba"/><rect x="371.7" y="57.0" width="2" height="12" fill="#b2b2ba"/><rect x="376.7" y="58.0" width="2" height="10" fill="#b2b2ba"/><rect x="381.7" y="57.0" width="2" height="12" fill="#b2b2ba"/><rect x="386.7" y="58.0" width="2" height="10" fill="#b2b2ba"/><rect x="391.7" y="58.0" width="2" height="10" fill="#b2b2ba"/><rect x="396.7" y="59.0" width="2" height="8" fill="#b2b2ba"/><rect x="401.7" y="57.0" width="2" height="12" fill="#b2b2ba"/><rect x="406.7" y="56.0" width="2" height="14" fill="#b2b2ba"/><rect x="411.7" y="56.0" width="2" height="14" fill="#b2b2ba"/><rect x="416.7" y="58.0" width="2" height="10" fill="#b2b2ba"/><rect x="421.7" y="57.0" width="2" height="12" fill="#b2b2ba"/><rect x="426.7" y="54.0" width="2" height="18" fill="#b2b2ba"/><rect x="431.7" y="56.0" width="2" height="14" fill="#b2b2ba"/><rect x="436.7" y="54.0" width="2" height="18" fill="#b2b2ba"/><rect x="441.7" y="52.0" width="2" height="22" fill="#b2b2ba"/><rect x="446.7" y="57.0" width="2" height="12" fill="#b2b2ba"/><rect x="451.7" y="55.0" width="2" height="16" fill="#b2b2ba"/><rect x="456.7" y="57.0" width="2" height="12" fill="#b2b2ba"/><rect x="461.7" y="44.0" width="2" height="38" fill="#b2b2ba"/><rect x="466.7" y="47.0" width="2" height="32" fill="#b2b2ba"/><rect x="471.7" y="56.0" width="2" height="14" fill="#b2b2ba"/><rect x="476.7" y="49.0" width="2" height="28" fill="#b2b2ba"/><rect x="481.7" y="55.0" width="2" height="16" fill="#b2b2ba"/><rect x="486.7" y="53.0" width="2" height="20" fill="#b2b2ba"/><rect x="491.7" y="52.0" width="2" height="22" fill="#b2b2ba"/><rect x="496.7" y="53.0" width="2" height="20" fill="#b2b2ba"/><rect x="501.7" y="58.0" width="2" height="10" fill="#b2b2ba"/><rect x="506.7" y="62.2" width="2" height="1.6" fill="#b2b2ba"/><rect x="511.7" y="62.2" width="2" height="1.6" fill="#b2b2ba"/><rect x="516.7" y="62.2" width="2" height="1.6" fill="#b2b2ba"/><rect x="521.7" y="59.0" width="2" height="8" fill="#b2b2ba"/><rect x="526.7" y="51.0" width="2" height="24" fill="#b2b2ba"/><rect x="531.7" y="46.0" width="2" height="34" fill="#b2b2ba"/><rect x="536.7" y="52.0" width="2" height="22" fill="#b2b2ba"/><rect x="541.7" y="50.0" width="2" height="26" fill="#b2b2ba"/><rect x="546.7" y="45.0" width="2" height="36" fill="#b2b2ba"/><rect x="551.7" y="58.0" width="2" height="10" fill="#b2b2ba"/><rect x="556.7" y="58.0" width="2" height="10" fill="#b2b2ba"/><rect x="561.7" y="62.2" width="2" height="1.6" fill="#b2b2ba"/><rect x="566.7" y="61.0" width="2" height="4" fill="#b2b2ba"/><rect x="571.7" y="57.0" width="2" height="12" fill="#b2b2ba"/><rect x="576.7" y="57.0" width="2" height="12" fill="#b2b2ba"/><rect x="581.7" y="60.0" width="2" height="6" fill="#b2b2ba"/><rect x="586.7" y="62.2" width="2" height="1.6" fill="#b2b2ba"/><rect x="340.9" y="38" width="2" height="50" fill="#e2e2ea"/></svg>
<svg class="a" style="left:18px;top:142px" width="22" height="16"><g fill="none" stroke="#c4c4cc" stroke-width="1.2" stroke-linejoin="round"><path d="M3.9 3.6H2.4Q0.7 3.6 0.7 5.3V8.7Q0.7 10.4 2.4 10.4H3.9L11.2 13.3V0.7Z"/><path d="M14.3 3.8Q16.8 7 14.3 10.2M17.1 1Q21 7 17.1 13"/></g></svg>
<div class="rate">1x</div>
<svg class="a" style="left:253px;top:141px" width="24" height="16"><path d="M11.5 1.2 Q12 0.5 12 1.5 V14.5 Q12 15.5 11.2 14.8 L1 8.6 Q0.2 8 1 7.4Z M22.5 1.2 Q23 0.5 23 1.5 V14.5 Q23 15.5 22.2 14.8 L12 8.6 Q11.2 8 12 7.4Z" fill="#c4c4cc"/></svg><div class="pause" style="left:294px"></div><div class="pause" style="left:304.6px"></div><svg class="a" style="left:329px;top:141px" width="24" height="16"><path d="M1.5 1.2 Q1 0.5 1 1.5 V14.5 Q1 15.5 1.8 14.8 L12 8.6 Q12.8 8 12 7.4Z M12.5 1.2 Q12 0.5 12 1.5 V14.5 Q12 15.5 12.8 14.8 L23 8.6 Q23.8 8 23 7.4Z" fill="#c4c4cc"/></svg>
</div>

<div class="blk" style="left:9px;top:1003px;width:1856px;height:200px"></div>
<div class="ta" style="left:22px;top:1041px;width:903px;height:160px"></div>
<div class="ta" style="left:949px;top:1041px;width:903px;height:160px"></div>

<div class="t" id="title" style="left:1353.20px;top:18.30px;font-size:19px;font-weight:700;color:#f4f4f5;transform:scaleX(0.9918)">おんプロ！free AIボイス500M v1.2.0</div>
<div class="t" id="subtitle" style="left:1671.52px;top:24.60px;font-size:13px;font-weight:400;color:#9a9aa2;transform:scaleX(0.9781)">Irodori-TTS-500M-v2-VoiceDesign</div>
<div class="t" id="lbl1" style="left:22.60px;top:72.00px;font-size:13px;font-weight:400;color:#e4e4e7;transform:scaleX(1.0280)">読み上げる文章（日本語）必須</div>
<div class="t" id="l0" style="left:33.60px;top:107.80px;font-size:13px;font-weight:400;color:#f4f4f5;transform:scaleX(0.9522)">旦那が動かない？　そりゃ大変</div>
<div class="t" id="l1" style="left:32.70px;top:147.20px;font-size:13px;font-weight:400;color:#f4f4f5;transform:scaleX(0.9045)">…でもそれ、結婚前から見えてたよね</div>
<div class="t" id="l2" style="left:33.60px;top:187.60px;font-size:13px;font-weight:400;color:#f4f4f5;transform:scaleX(0.9675)">仕事がつらい　子育てが地獄</div>
<div class="t" id="l3" style="left:33.60px;top:225.00px;font-size:13px;font-weight:400;color:#f4f4f5;transform:scaleX(1.0515)">不幸の実況　毎日更新</div>
<div class="t" id="l4" style="left:33.60px;top:264.40px;font-size:13px;font-weight:400;color:#f4f4f5;transform:scaleX(0.8397)">悲劇のヒロインって</div>
<div class="t" id="l5" style="left:32.67px;top:303.80px;font-size:13px;font-weight:400;color:#f4f4f5;transform:scaleX(0.9309)">そんなに役が好きなの？</div>
<div class="t" id="lbl2" style="left:22.40px;top:355.60px;font-size:13px;font-weight:400;color:#e4e4e7;transform:scaleX(0.8579)">ボイスデザイン（声質の説明・プロンプト：オプション）</div>
<div class="t" id="ta2" style="left:33.50px;top:393.90px;font-size:13px;font-weight:400;color:#f4f4f5;transform:scaleX(1.0368)">若い主婦。</div>
<div class="t" id="lbl3" style="left:22.90px;top:479.75px;font-size:13px;font-weight:400;color:#e4e4e7;transform:scaleX(0.8728)">サンプリング設定</div>
<div class="t" id="steps" style="left:35.70px;top:521.90px;font-size:13px;font-weight:400;color:#e4e4e7;transform:scaleX(0.9033)">生成ステップ数</div>
<div class="t" id="r1" style="left:167.10px;top:526.70px;font-size:13px;font-weight:400;color:#e4e4e7;transform:scaleX(1.0046);-webkit-text-stroke:0.55px currentColor">40 - 中品質</div>
<div class="t" id="r2" style="left:291.40px;top:526.70px;font-size:13px;font-weight:400;color:#e4e4e7;transform:scaleX(1.0015);-webkit-text-stroke:0.55px currentColor">70 - 高品質</div>
<div class="t" id="r3" style="left:415.20px;top:526.70px;font-size:13px;font-weight:400;color:#e4e4e7;transform:scaleX(1.0094);-webkit-text-stroke:0.55px currentColor">100 - 最高品質</div>
<div class="t" id="s1l" style="left:35.90px;top:592.30px;font-size:13px;font-weight:400;color:#e4e4e7;transform:scaleX(1.0487)">生成数</div>
<div class="t" id="s1a" style="left:34.96px;top:628.80px;font-size:11px;font-weight:400;color:#a1a1aa;transform:scaleX(0.9400)">1</div>
<div class="t" id="s1b" style="left:460.10px;top:628.70px;font-size:11px;font-weight:400;color:#a1a1aa;transform:scaleX(0.9167)">6</div>
<div class="t" id="s2l" style="left:492.20px;top:593.20px;font-size:13px;font-weight:400;color:#e4e4e7;transform:scaleX(0.9657)">CFG 忠実度</div>
<div class="t" id="s2i" style="left:492.20px;top:614.70px;font-size:11px;font-weight:400;color:#a1a1aa;transform:scaleX(0.9741)">0:自然だが読み間違え / 10:テキスト重視で不自然</div>
<div class="t" id="s2a" style="left:492.30px;top:648.00px;font-size:11px;font-weight:400;color:#a1a1aa;transform:scaleX(0.9167)">0</div>
<div class="t" id="s2b" style="left:911.02px;top:648.00px;font-size:11px;font-weight:400;color:#a1a1aa;transform:scaleX(0.9818)">10</div>
<div class="t" id="s3l" style="left:949.00px;top:593.20px;font-size:13px;font-weight:400;color:#e4e4e7;transform:scaleX(0.9900)">CFG 忠実度:詳細</div>
<div class="t" id="s3i" style="left:949.00px;top:614.70px;font-size:11px;font-weight:400;color:#a1a1aa;transform:scaleX(1.0604)">0:自由度重視 / 10:忠実度重視</div>
<div class="t" id="s3a" style="left:949.30px;top:648.00px;font-size:11px;font-weight:400;color:#a1a1aa;transform:scaleX(0.9167)">0</div>
<div class="t" id="s3b" style="left:1368.02px;top:648.00px;font-size:11px;font-weight:400;color:#a1a1aa;transform:scaleX(0.9818)">10</div>
<div class="t" id="seedl" style="left:1404.92px;top:591.60px;font-size:13px;font-weight:400;color:#e4e4e7;transform:scaleX(0.8753)">シード値 (空欄でランダム)</div>
<div class="t" id="btn" style="left:887.43px;top:712.20px;font-size:14px;font-weight:700;color:#ffffff;transform:scaleX(1.0265)">音声を生成する</div>
<div class="t" id="p0l" style="left:37.41px;top:763.00px;font-size:11px;font-weight:400;color:#e4e4e7;transform:scaleX(0.9744)">生成された音声 1</div>
<div class="t" id="p0a" style="left:22.60px;top:860.30px;font-size:12px;font-weight:400;color:#d4d4d8;transform:scaleX(0.9833)">0:28</div>
<div class="t" id="p0b" style="left:578.76px;top:860.30px;font-size:12px;font-weight:400;color:#d4d4d8;transform:scaleX(1.0696)">0:28</div>
<div class="t" id="p1l" style="left:661.21px;top:763.00px;font-size:11px;font-weight:400;color:#e4e4e7;transform:scaleX(0.9744)">生成された音声 2</div>
<div class="t" id="p1a" style="left:645.79px;top:860.30px;font-size:12px;font-weight:400;color:#d4d4d8;transform:scaleX(1.0522)">0:07</div>
<div class="t" id="p1b" style="left:1203.59px;top:860.30px;font-size:12px;font-weight:400;color:#d4d4d8;transform:scaleX(1.0391)">0:25</div>
<div class="t" id="p2l" style="left:1285.80px;top:763.00px;font-size:11px;font-weight:400;color:#e4e4e7;transform:scaleX(0.9663)">生成された音声 3</div>
<div class="t" id="p2a" style="left:1269.80px;top:860.30px;font-size:12px;font-weight:400;color:#d4d4d8;transform:scaleX(1.0348)">0:14</div>
<div class="t" id="p2b" style="left:1827.19px;top:860.30px;font-size:12px;font-weight:400;color:#d4d4d8;transform:scaleX(1.0348)">0:25</div>
<div class="t" id="lgl" style="left:22.80px;top:1014.80px;font-size:13px;font-weight:400;color:#e4e4e7;transform:scaleX(0.9250)">実行ログ</div>
<div class="t" id="tml" style="left:949.60px;top:1014.50px;font-size:13px;font-weight:400;color:#e4e4e7;transform:scaleX(1.0706)">生成時間</div>
<div class="t" id="g0" style="left:33.30px;top:1053.75px;font-size:14px;font-weight:400;color:#f4f4f5;transform:scaleX(0.9615)">runtime: reloaded</div>
<div class="t" id="g1" style="left:33.30px;top:1073.35px;font-size:14px;font-weight:400;color:#f4f4f5;transform:scaleX(0.8935)">seed_used: 415528620276988085</div>
<div class="t" id="g2" style="left:33.30px;top:1092.95px;font-size:14px;font-weight:400;color:#f4f4f5;transform:scaleX(0.9241)">candidates: 3</div>
<div class="t" id="g3" style="left:33.30px;top:1113.55px;font-size:14px;font-weight:400;color:#f4f4f5;transform:scaleX(0.9268)">saved[1]: gradio_outputs_voicedesign\sample_20260412_123905_314958_001.wav</div>
<div class="t" id="g4" style="left:33.30px;top:1133.15px;font-size:14px;font-weight:400;color:#f4f4f5;transform:scaleX(0.9268)">saved[2]: gradio_outputs_voicedesign\sample_20260412_123905_314958_002.wav</div>
<div class="t" id="g5" style="left:33.30px;top:1152.75px;font-size:14px;font-weight:400;color:#f4f4f5;transform:scaleX(0.9268)">saved[3]: gradio_outputs_voicedesign\sample_20260412_123905_314958_003.wav</div>
<div class="t" id="m0" style="left:960.30px;top:1053.75px;font-size:14px;font-weight:400;color:#f4f4f5;transform:scaleX(0.9482)">[timing] ---- request ----</div>
<div class="t" id="m1" style="left:960.30px;top:1073.35px;font-size:14px;font-weight:400;color:#f4f4f5;transform:scaleX(0.9470)">[timing] tokenize_text: 2.2 ms</div>
<div class="t" id="m2" style="left:960.30px;top:1092.95px;font-size:14px;font-weight:400;color:#f4f4f5;transform:scaleX(0.9369)">[timing] prepare_reference: 0.2 ms</div>
<div class="t" id="m3" style="left:960.30px;top:1113.55px;font-size:14px;font-weight:400;color:#f4f4f5;transform:scaleX(0.9354)">[timing] sample_rf: 26170.2 ms</div>
<div class="t" id="m4" style="left:960.30px;top:1133.15px;font-size:14px;font-weight:400;color:#f4f4f5;transform:scaleX(0.9605)">[timing] unpatchify_latent: 0.1 ms</div>
<div class="t" id="m5" style="left:960.30px;top:1152.75px;font-size:14px;font-weight:400;color:#f4f4f5;transform:scaleX(0.9452)">[timing] decode_latent: 4891.0 ms</div>
</body></html>
